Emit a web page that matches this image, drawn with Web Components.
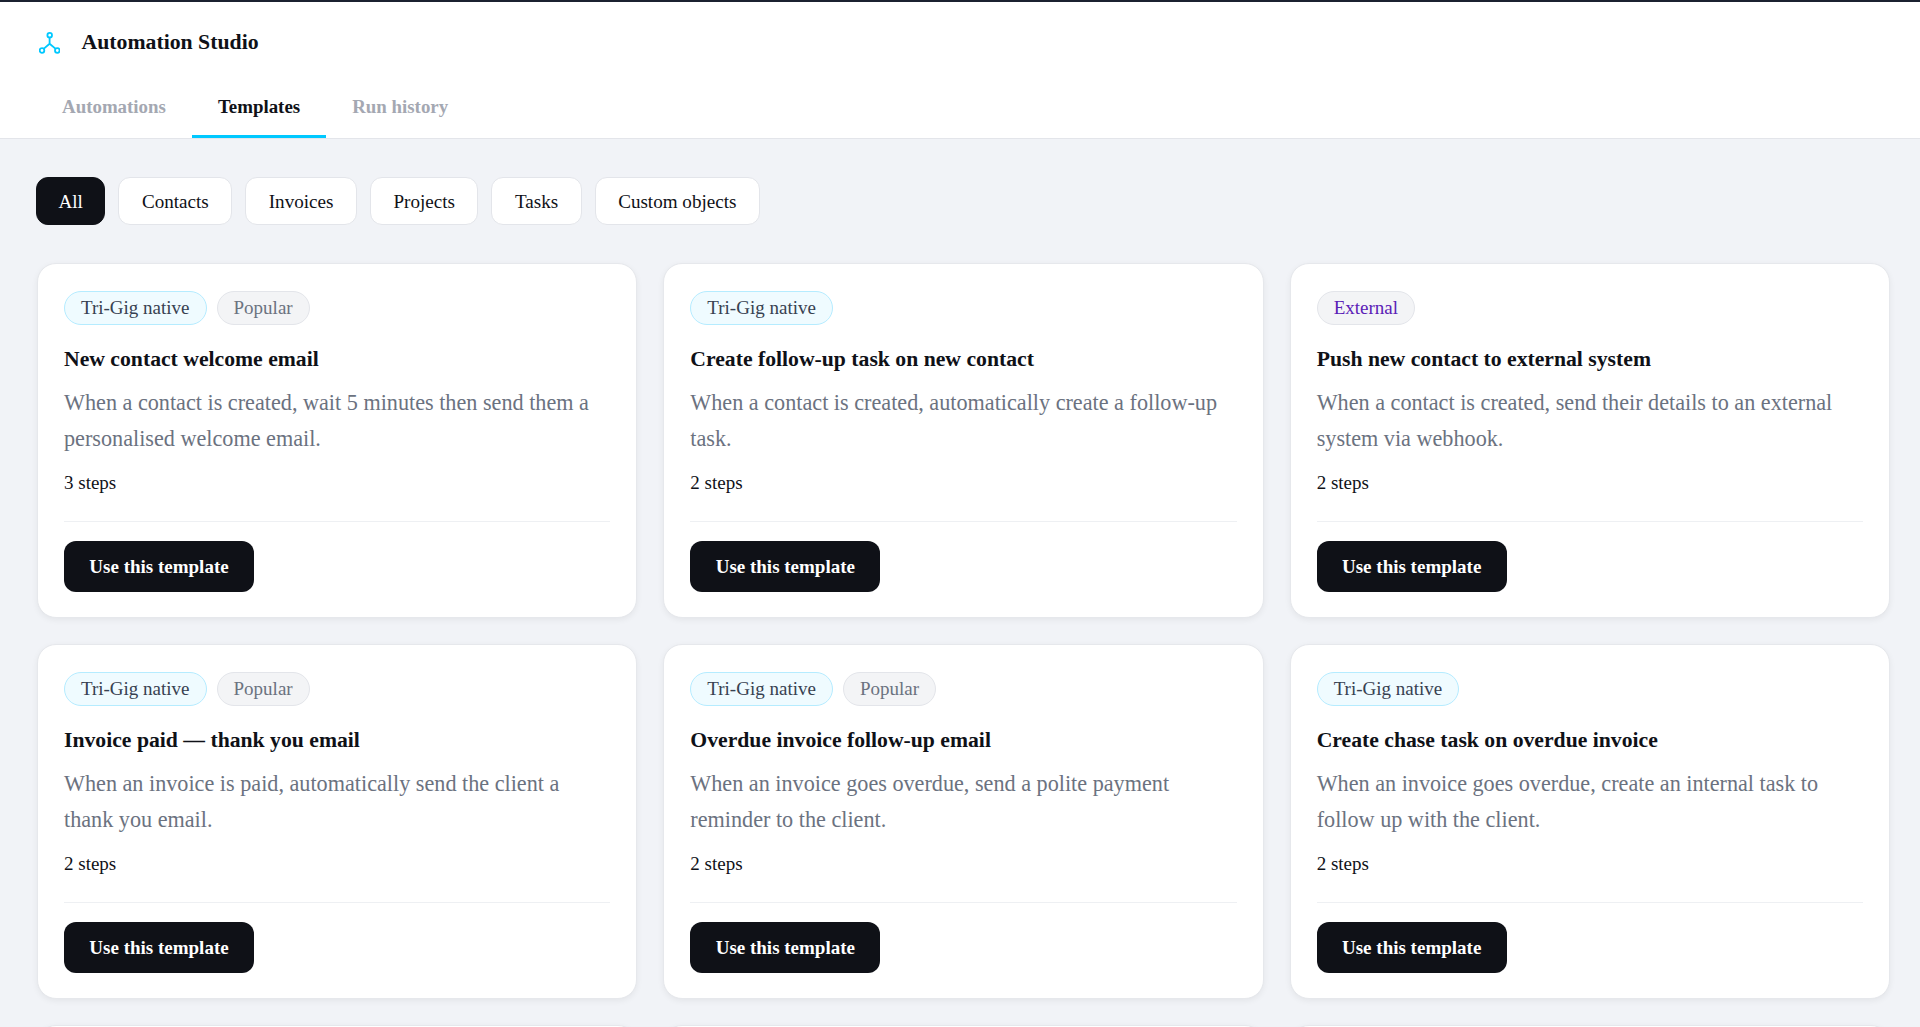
<!DOCTYPE html>
<html lang="en">
<head>
<meta charset="utf-8">
<title>Automation Studio</title>
<style>
  html, body { margin: 0; height: 100%; overflow: hidden; }
  body {
    background: #f1f3f7;
    color: #0f1117;
    font-family: "Liberation Serif", "Times New Roman", serif;
  }
</style>
</head>
<body>
<studio-app>
  <studio-header slot="header" heading="Automation Studio">
    <nav-tab>Automations</nav-tab>
    <nav-tab active>Templates</nav-tab>
    <nav-tab>Run history</nav-tab>
  </studio-header>

  <filter-bar slot="filters">
    <filter-chip active>All</filter-chip>
    <filter-chip>Contacts</filter-chip>
    <filter-chip>Invoices</filter-chip>
    <filter-chip>Projects</filter-chip>
    <filter-chip>Tasks</filter-chip>
    <filter-chip>Custom objects</filter-chip>
  </filter-bar>

  <template-card heading="New contact welcome email" steps="3 steps">
    <tag-pill slot="tags" kind="native">Tri-Gig native</tag-pill>
    <tag-pill slot="tags">Popular</tag-pill>
    When a contact is created, wait 5 minutes then send them a personalised welcome email.
  </template-card>
  <template-card heading="Create follow-up task on new contact" steps="2 steps">
    <tag-pill slot="tags" kind="native">Tri-Gig native</tag-pill>
    When a contact is created, automatically create a follow-up task.
  </template-card>
  <template-card heading="Push new contact to external system" steps="2 steps">
    <tag-pill slot="tags" kind="external">External</tag-pill>
    When a contact is created, send their details to an external system via webhook.
  </template-card>
  <template-card heading="Invoice paid — thank you email" steps="2 steps">
    <tag-pill slot="tags" kind="native">Tri-Gig native</tag-pill>
    <tag-pill slot="tags">Popular</tag-pill>
    When an invoice is paid, automatically send the client a thank you email.
  </template-card>
  <template-card heading="Overdue invoice follow-up email" steps="2 steps">
    <tag-pill slot="tags" kind="native">Tri-Gig native</tag-pill>
    <tag-pill slot="tags">Popular</tag-pill>
    When an invoice goes overdue, send a polite payment reminder to the client.
  </template-card>
  <template-card heading="Create chase task on overdue invoice" steps="2 steps">
    <tag-pill slot="tags" kind="native">Tri-Gig native</tag-pill>
    When an invoice goes overdue, create an internal task to follow up with the client.
  </template-card>
  <template-card blank></template-card>
  <template-card blank></template-card>
  <template-card blank></template-card>
</studio-app>

<script>
const define = (cls) => {
  if (!customElements.get(cls.is)) {
    customElements.define(cls.is, cls);
  }
};

class ShadowBase extends HTMLElement {
  connectedCallback() {
    if (!this.shadowRoot) {
      this.attachShadow({ mode: 'open' });
      this.shadowRoot.innerHTML = this.constructor.template;
      this.render();
    }
  }

  render() {}
}

class StudioApp extends ShadowBase {
  static get is() {
    return 'studio-app';
  }

  static get template() {
    return `
      <style>
        :host { display: block; height: 100%; overflow: hidden; }
        main { padding: 38px 30px 0 37px; }
        #grid {
          display: grid;
          grid-template-columns: repeat(3, 1fr);
          gap: 26px;
          margin-top: 38px;
        }
      </style>
      <slot name="header"></slot>
      <main>
        <slot name="filters"></slot>
        <div id="grid"><slot></slot></div>
      </main>
    `;
  }
}

class StudioHeader extends ShadowBase {
  static get is() {
    return 'studio-header';
  }

  static get template() {
    return `
      <style>
        :host {
          display: block;
          background: #fff;
          border-top: 2px solid #1b2130;
          border-bottom: 1px solid #e3e5ea;
        }
        #brand {
          display: flex;
          align-items: center;
          gap: 22px;
          height: 81px;
          padding-left: 38.5px;
        }
        svg { display: block; width: 21px; height: 22px; }
        h1 { margin: 0; font-size: 21.75px; font-weight: 700; line-height: 1; }
        nav { display: flex; padding-left: 36px; }
      </style>
      <div id="brand">
        <svg viewBox="0 0 21 22" fill="none" stroke="#00c8ff" stroke-width="1.8">
          <circle cx="10.7" cy="3.2" r="2.3"></circle>
          <circle cx="3" cy="18.5" r="2.3"></circle>
          <circle cx="18.3" cy="18.5" r="2.3"></circle>
          <path d="M10.6 5.5v6.3M10.6 11.8L4.6 16.9M10.6 11.8l6.1 5.1"></path>
        </svg>
        <h1 id="heading"></h1>
      </div>
      <nav><slot></slot></nav>
    `;
  }

  render() {
    this.shadowRoot.querySelector('#heading').textContent = this.getAttribute('heading');
  }
}

class NavTab extends ShadowBase {
  static get is() {
    return 'nav-tab';
  }

  static get template() {
    return `
      <style>
        :host {
          display: block;
          box-sizing: border-box;
          height: 55px;
          padding: 12px 26px 0;
          font-size: 18.9px;
          font-weight: 700;
          line-height: 24px;
          color: #a4a8b2;
          border-bottom: 3px solid transparent;
        }
        :host([active]) { color: #0f1117; border-bottom-color: #00c8ff; }
      </style>
      <slot></slot>
    `;
  }
}

class FilterBar extends ShadowBase {
  static get is() {
    return 'filter-bar';
  }

  static get template() {
    return `
      <style>
        :host { display: flex; align-items: center; gap: 13px; margin-left: -1px; }
      </style>
      <slot></slot>
    `;
  }
}

class FilterChip extends ShadowBase {
  static get is() {
    return 'filter-chip';
  }

  static get template() {
    return `
      <style>
        :host {
          display: block;
          box-sizing: border-box;
          height: 48px;
          padding: 0 22.5px;
          font-size: 19.1px;
          line-height: 47px;
          color: #0f1117;
          background: #fff;
          border: 1px solid #e3e5ea;
          border-radius: 12px;
        }
        :host([active]) { padding: 0 21.5px; color: #fff; background: #0f1117; border-color: #0f1117; }
      </style>
      <slot></slot>
    `;
  }
}

class TagPill extends ShadowBase {
  static get is() {
    return 'tag-pill';
  }

  static get template() {
    return `
      <style>
        :host {
          display: block;
          box-sizing: border-box;
          height: 34px;
          padding: 0 16px;
          font-size: 19px;
          line-height: 32px;
          color: #6b7280;
          background: #f3f4f6;
          border: 1px solid #e3e5ea;
          border-radius: 17px;
        }
        :host([kind="native"]) { color: #374151; background: #effbff; border-color: #b5ecff; }
        :host([kind="external"]) { color: #5b21b6; }
      </style>
      <slot></slot>
    `;
  }
}

class TemplateCard extends ShadowBase {
  static get is() {
    return 'template-card';
  }

  static get template() {
    return `
      <style>
        :host {
          display: block;
          box-sizing: border-box;
          min-height: 355px;
          padding: 27px 26px 25px;
          background: #fff;
          border: 1px solid #e6e8ec;
          border-radius: 19px;
          box-shadow: 0 2px 6px rgba(15, 17, 23, .06);
        }
        #tags { display: flex; gap: 10px; height: 34px; }
        h2 { margin: 20px 0 0; font-size: 21.7px; font-weight: 700; line-height: 28px; color: #0f1117; }
        p { margin: 12px 0 0; font-size: 22.2px; line-height: 36px; color: #6b7280; }
        #steps { margin-top: 13px; font-size: 19px; line-height: 26px; color: #0f1117; }
        hr { margin: 25px 0 0; border: 0; border-top: 1px solid #eef0f3; }
        button {
          display: block;
          box-sizing: border-box;
          width: 190px;
          height: 51px;
          margin-top: 19px;
          padding: 0;
          font: 700 19px "Liberation Serif", "Times New Roman", serif;
          color: #fff;
          background: #0f1117;
          border: 0;
          border-radius: 12px;
        }
      </style>
      <div id="tags"><slot name="tags"></slot></div>
      <h2 id="heading"></h2>
      <p><slot></slot></p>
      <div id="steps"></div>
      <hr>
      <button>Use this template</button>
    `;
  }

  render() {
    if (this.hasAttribute('blank')) {
      this.shadowRoot.querySelectorAll('#tags, h2, p, #steps, hr, button').forEach((el) => el.remove());
      return;
    }
    this.shadowRoot.querySelector('#heading').textContent = this.getAttribute('heading');
    this.shadowRoot.querySelector('#steps').textContent = this.getAttribute('steps');
  }
}

[StudioApp, StudioHeader, NavTab, FilterBar, FilterChip, TagPill, TemplateCard].forEach(define);
</script>
</body>
</html>
